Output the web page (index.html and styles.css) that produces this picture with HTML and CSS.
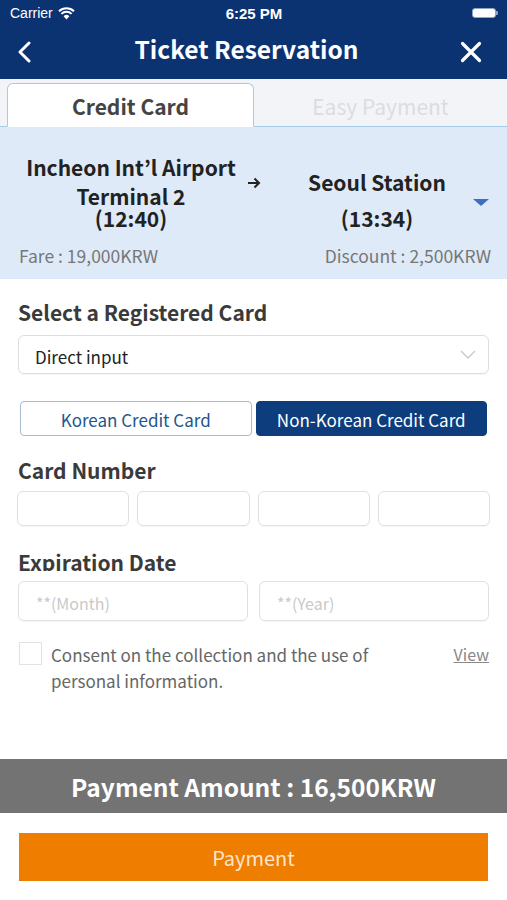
FILE: index.html
```html
<!DOCTYPE html>
<html lang="en">

<head>
    <meta charset="UTF-8">
    <title>Ticket Reservation</title>
    <link rel="stylesheet" href="styles.css">
</head>

<body>
    <div class="status">
        <div class="carrier">Carrier
            <svg class="wifi" width="17" height="13" viewBox="0 0 17 13">
                <path d="M8.5 12.5 L5.6 9.2 A4.2 4.2 0 0 1 11.4 9.2 Z" fill="#fff"/>
                <path d="M3.4 6.9 A7.3 7.3 0 0 1 13.6 6.9" stroke="#fff" stroke-width="2" fill="none"/>
                <path d="M1 4.3 A10.8 10.8 0 0 1 16 4.3" stroke="#fff" stroke-width="2" fill="none"/>
            </svg>
        </div>
        <div class="clock">6:25 PM</div>
        <div class="battery"><span class="level"></span></div>
    </div>

    <div class="navbar">
        <svg class="back" width="16" height="22" viewBox="0 0 16 22">
            <polyline points="12,2 3,11 12,20" stroke="#fff" stroke-width="3" fill="none" stroke-linecap="round" stroke-linejoin="round"/>
        </svg>
        <h1>Ticket Reservation</h1>
        <svg class="close" width="22" height="22" viewBox="0 0 22 22">
            <path d="M2.5 2.5 L19.5 19.5 M19.5 2.5 L2.5 19.5" stroke="#fff" stroke-width="3.2" stroke-linecap="round"/>
        </svg>
    </div>

    <div class="tabs">
        <div class="tab active">Credit Card</div>
        <div class="tab">Easy Payment</div>
    </div>

    <div class="route">
        <div class="station from">
            <div class="line gap">Incheon Int’l Airport</div>
            <div class="line">Terminal 2</div>
            <div class="line">(12:40)</div>
        </div>
        <svg class="arrow" width="16" height="12" viewBox="0 0 16 12">
            <path d="M2 6 H13 M8.5 1.5 L13 6 L8.5 10.5" stroke="#222" stroke-width="2" fill="none"/>
        </svg>
        <div class="station to">
            <div class="line wide">Seoul Station</div>
            <div class="line">(13:34)</div>
        </div>
        <div class="fare">
            <span>Fare : 19,000KRW</span>
            <span>Discount : 2,500KRW</span>
        </div>
        <span class="drop"></span>
    </div>

    <div class="form">
        <h2 class="label first">Select a Registered Card</h2>
        <div class="select">
            <span>Direct input</span>
            <svg width="16" height="9" viewBox="0 0 16 9">
                <polyline points="1,1 8,8 15,1" stroke="#c8c8c8" stroke-width="1.4" fill="none"/>
            </svg>
        </div>

        <div class="toggle">
            <div class="opt">Korean Credit Card</div>
            <div class="opt on">Non-Korean Credit Card</div>
        </div>

        <h2 class="label">Card Number</h2>
        <div class="cardno">
            <div class="box"></div>
            <div class="box"></div>
            <div class="box"></div>
            <div class="box"></div>
        </div>

        <h2 class="label clip">Expiration Date</h2>
        <div class="expiry">
            <div class="box">**(Month)</div>
            <div class="box">**(Year)</div>
        </div>

        <div class="consent">
            <span class="check"></span>
            <p>Consent on the collection and the use of personal information.</p>
            <a class="view">View</a>
        </div>
    </div>

    <div class="footer">
        <div class="amount">Payment Amount : 16,500KRW</div>
        <div class="paywrap">
            <button class="pay">Payment</button>
        </div>
    </div>
</body>

</html>
```

FILE: styles.css
```css
html {
    background: #fff;
}
body {
    margin: 0;
    width: 507px;
    height: 900px;
    display: flex;
    flex-direction: column;
    font-family: "Noto Sans CJK KR", "Noto Sans", sans-serif;
    color: #333;
    overflow: hidden;
}

/* status + nav */
.status {
    height: 30px;
    background: #0b3372;
    color: #fff;
    display: flex;
    align-items: center;
    justify-content: space-between;
    padding: 0 9px 4px 10px;
    box-sizing: border-box;
    font-family: "Liberation Sans", Arial, sans-serif;
}
.carrier {
    width: 90px;
    font-size: 14px;
    display: flex;
    align-items: center;
    gap: 5px;
}
.clock {
    font-size: 15px;
    font-weight: bold;
}
.battery {
    width: 90px;
    display: flex;
    justify-content: flex-end;
}
.battery .level {
    display: block;
    width: 22px;
    height: 8px;
    background: #fff;
    border: 1.5px solid #8fa3c4;
    border-radius: 3px;
}
.battery:after {
    content: '';
    width: 2px;
    height: 4px;
    margin-top: 3px;
    background: #8fa3c4;
    border-radius: 0 1px 1px 0;
}
.navbar {
    height: 49px;
    box-sizing: border-box;
    background: #0b3372;
    display: flex;
    align-items: center;
    justify-content: space-between;
    padding: 0 25px 6px 17px;
}
.navbar h1 {
    margin: 0 0 6px;
    color: #fff;
    font-size: 24.5px;
    font-weight: bold;
    line-height: 30px;
}

/* tabs */
.tabs {
    height: 48px;
    box-sizing: border-box;
    background: #f3f4f8;
    display: flex;
    padding: 4px 0 0 7px;
    border-bottom: 1px solid #a6cbe8;
}
.tab {
    flex: 0 0 253px;
    text-align: center;
    font-size: 21px;
    line-height: 46px;
    color: #dcdcdf;
}
.tab.active {
    flex: 0 0 245px;
    background: #fff;
    color: #444;
    font-weight: bold;
    line-height: 45px;
    border: 1px solid #a6cbe8;
    border-bottom: 1px solid #fff;
    border-radius: 6px 6px 0 0;
    margin-bottom: -1px;
}

/* route */
.route {
    height: 152px;
    box-sizing: border-box;
    background: #deeaf8;
    display: grid;
    grid-template-columns: 230px 16px 230px;
    align-content: start;
    padding: 29px 0 0 16px;
    position: relative;
}
.station {
    text-align: center;
    font-weight: bold;
    font-size: 21px;
    color: #222;
}
.station .line {
    line-height: 22px;
}
.station .gap {
    margin-bottom: 7px;
}
.station .wide {
    margin-bottom: 14px;
}
.to {
    margin-top: 15px;
}
.arrow {
    margin-top: 21px;
}
.fare {
    grid-column: 1 / 4;
    display: flex;
    justify-content: space-between;
    margin: 16px 0 0 3px;
    width: 472px;
    font-size: 17.5px;
    line-height: 22px;
    color: #777;
}
.drop {
    position: absolute;
    left: 473px;
    top: 72px;
    width: 0;
    height: 0;
    border-left: 8px solid transparent;
    border-right: 8px solid transparent;
    border-top: 7px solid #3b6fc6;
}

/* form */
.form {
    flex: 1;
    padding: 0 18px;
}
.label {
    margin: 20px 0 7px;
    font-size: 21px;
    font-weight: bold;
    line-height: 28px;
    color: #3a3a3a;
}
.label.first {
    margin-top: 19px;
    margin-bottom: 9px;
}
.label.clip {
    margin-top: 22px;
    margin-bottom: 10px;
    height: 23px;
    overflow: hidden;
}
.select {
    height: 39px;
    box-sizing: border-box;
    border: 1px solid #dedede;
    border-radius: 6px;
    display: flex;
    align-items: center;
    justify-content: space-between;
    padding: 3px 12px 0 16px;
    font-size: 17px;
    color: #222;
    box-shadow: 0 1px 1px rgba(0, 0, 0, 0.04);
}
.select svg {
    margin-top: -3px;
}
.toggle {
    display: flex;
    gap: 4px;
    margin: 27px 2px 0;
}
.opt {
    flex: 1;
    height: 35px;
    box-sizing: border-box;
    border: 1px solid #a9bbd2;
    border-radius: 4px;
    text-align: center;
    font-size: 17px;
    line-height: 36px;
    color: #22568f;
}
.opt.on {
    background: #0d3d7c;
    border-color: #0d3d7c;
    color: #fff;
}
.box {
    height: 35px;
    box-sizing: border-box;
    border: 1px solid #e0e0e0;
    border-radius: 6px;
    box-shadow: 0 1px 1px rgba(0, 0, 0, 0.04);
}
.cardno {
    display: grid;
    grid-template-columns: repeat(4, 1fr);
    gap: 8px;
    margin: 0 -1px;
}
.expiry {
    display: grid;
    grid-template-columns: 1fr 1fr;
    gap: 11px;
}
.expiry .box {
    height: 40px;
    padding-left: 17px;
    font-size: 16px;
    line-height: 43px;
    color: #c9c9c9;
}
.consent {
    display: flex;
    align-items: flex-start;
    margin-top: 21px;
    padding-left: 1px;
}
.check {
    flex: 0 0 23px;
    height: 23px;
    box-sizing: border-box;
    border: 1px solid #e2e2e2;
}
.consent p {
    margin: 0 0 0 9px;
    width: 330px;
    font-size: 17px;
    line-height: 26px;
    color: #666;
}
.view {
    margin-left: auto;
    font-size: 16px;
    line-height: 24px;
    color: #888;
    text-decoration: underline;
}

/* footer */
.amount {
    height: 54px;
    background: #737373;
    color: #fff;
    text-align: center;
    font-size: 24.5px;
    font-weight: bold;
    line-height: 56px;
}
.paywrap {
    padding: 20px 19px 19px;
}
.pay {
    display: block;
    width: 100%;
    height: 48px;
    border: 0;
    background: #ef7d00;
    color: #fde6cc;
    font-family: inherit;
    font-size: 20px;
}
```
